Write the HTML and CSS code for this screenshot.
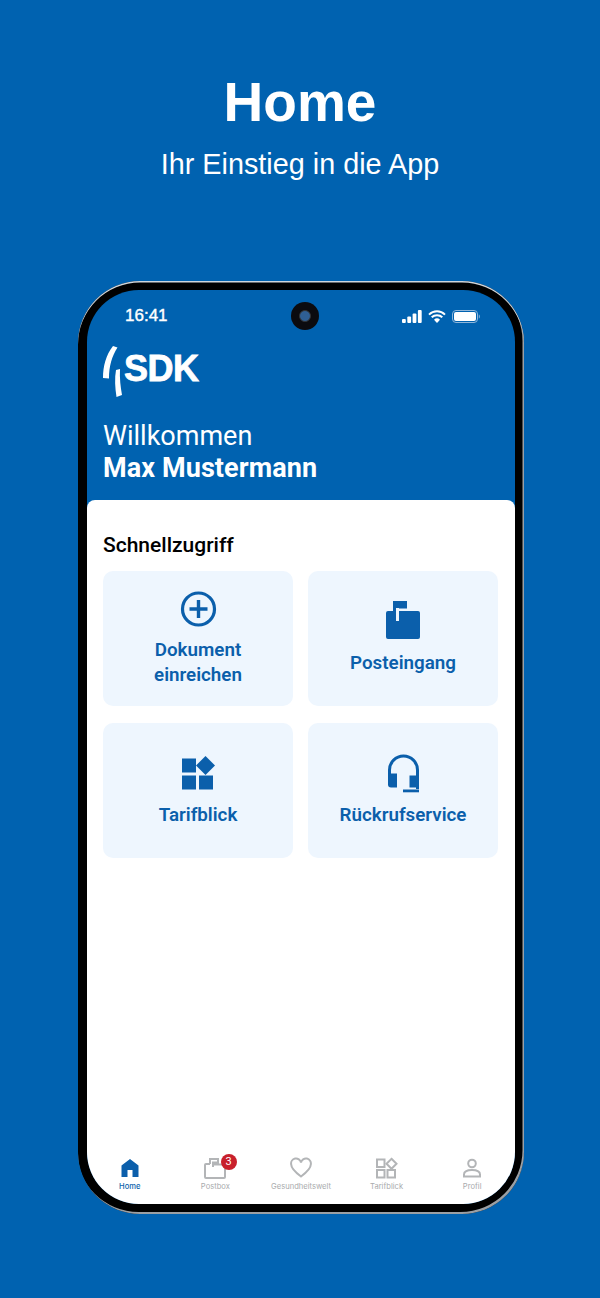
FILE: index.html
```html
<!DOCTYPE html><html><head><meta charset='utf-8'/>
<title>SDK Home</title>
<link rel="stylesheet" href="styles.css">
</head>
<body>

<div class="head">
	<h1>Home</h1>
	<p>Ihr Einstieg in die App</p>
</div>

<div class="phone">
	<div class="camera"><span></span></div>
	<div class="screen">
		<div class="top">
			<div class="status">
				<span class="time">16:41</span>
				<div class="status-icons">
					<svg width="20" height="13" viewBox="0 0 20 13"><rect x="0" y="9" width="3.800" height="4" rx="1"/><rect x="5.300" y="6.500" width="3.800" height="6.500" rx="1"/><rect x="10.600" y="3.500" width="3.800" height="9.500" rx="1"/><rect x="15.900" y="0" width="3.800" height="13" rx="1"/></svg>
					<svg class="wifi" width="18" height="13" viewBox="0 0 18 13"><path d="M1 4.600a11.500 11.500 0 0 1 16 0M3.700 7.300a7.600 7.600 0 0 1 10.600 0" fill="none" stroke="#fff" stroke-width="2"/><path d="M9 13l-3-3.200a4.300 4.300 0 0 1 6 0z"/></svg>
					<svg width="28" height="13" viewBox="0 0 28 13"><rect x="0.500" y="0.500" width="25" height="12" rx="3.500" fill="none" stroke="#8fb6da"/><rect x="2" y="2" width="22" height="9" rx="2"/><path d="M26.800 4.500c.8.300 1 1.200 1 2s-.2 1.700-1 2z" fill="#8fb6da"/></svg>
				</div>
			</div>
			<div class="logo">
				<svg width="24" height="52" viewBox="0 0 24 52"><path d="M10 0l4.500 1.500C9 10 6 20 6 32.500L0 32C0 20 3 9 10 0z"/><path d="M13 24l4-1c-.5 9 .5 18 2 26l-5.500 2c-1.500-9-2-19-.5-27z"/></svg>
				<span>SDK</span>
			</div>
			<div class="welcome">Willkommen</div>
			<div class="name">Max Mustermann</div>
		</div>

		<div class="sheet">
			<h2>Schnellzugriff</h2>
			<div class="grid">
				<a class="card">
					<svg width="37" height="37" viewBox="0 0 37 37"><circle cx="18.500" cy="18.500" r="16" fill="none" stroke="#0b5fab" stroke-width="3.200"/><path d="M18.500 9.500v18M9.500 18.500h18" fill="none" stroke="#0b5fab" stroke-width="3.400"/></svg>
					<span>Dokument<br>einreichen</span>
				</a>
				<a class="card">
					<svg width="36" height="40" viewBox="0 2 36 40"><path d="M8 1h14v7.500H13V11h20a2 2 0 0 1 2 2v24a2 2 0 0 1-2 2H3a2 2 0 0 1-2-2V13a2 2 0 0 1 2-2h5z"/><rect x="11" y="8" width="3" height="13" fill="#eef6fe"/></svg>
					<span>Posteingang</span>
				</a>
				<a class="card">
					<svg width="36" height="40" viewBox="0 0 36 40"><rect x="2" y="4.500" width="14" height="14"/><rect x="2" y="21.500" width="14" height="14"/><rect x="19" y="21.500" width="14" height="14"/><path d="M25.500 2l9.500 9.500-9.500 9.500-9.500-9.500z"/></svg>
					<span>Tarifblick</span>
				</a>
				<a class="card">
					<svg width="36" height="40" viewBox="0 0 36 40"><path d="M4.500 28V16a14 14 0 0 1 28 0v19" fill="none" stroke="#0b5fab" stroke-width="3"/><path d="M3 19.500h9v14H6a3 3 0 0 1-3-3z"/><path d="M24.500 21.500H34v12h-9.500z"/><path d="M18 35.500h16v2.800H18z"/></svg>
					<span>Rückrufservice</span>
				</a>
			</div>
		</div>

		<div class="tabs">
			<div class="tab on">
				<svg width="20" height="20" viewBox="0 0 20 20"><path d="M10 1l8.500 6.500V19H12.500v-7h-5v7H1.500V7.500z"/></svg>
				<span>Home</span>
			</div>
			<div class="tab">
				<svg class="line" width="24" height="22" viewBox="0 0 24 22"><path d="M7 7V2h8v3.500h-5V10M7 7H3a1 1 0 0 0-1 1v12a1 1 0 0 0 1 1h18a1 1 0 0 0 1-1V10M10 7.500h9"/></svg>
				<span>Postbox</span>
				<b class="badge">3</b>
			</div>
			<div class="tab">
				<svg class="line" width="22" height="20" viewBox="0 0 22 20"><path d="M11 18.500C5 14 1.200 10.500 1.200 6.500A5 5 0 0 1 11 4.500a5 5 0 0 1 9.800 2c0 4-3.800 7.500-9.800 12z"/></svg>
				<span>Gesundheitswelt</span>
			</div>
			<div class="tab">
				<svg class="line" width="22" height="20" viewBox="0 0 22 20"><rect x="1" y="1.500" width="7.500" height="7.500"/><rect x="1" y="12" width="7.500" height="7.500"/><rect x="11.500" y="12" width="7.500" height="7.500"/><path d="M15.500 0.800l5 5-5 5-5-5z"/></svg>
				<span>Tarifblick</span>
			</div>
			<div class="tab">
				<svg class="line" width="20" height="20" viewBox="0 0 20 20"><circle cx="10" cy="5.500" r="3.800"/><path d="M2 18.500v-2c0-3 3.500-4.500 8-4.500s8 1.500 8 4.500v2z"/></svg>
				<span>Profil</span>
			</div>
		</div>
	</div>
</div>

</body>
</html>
```

FILE: styles.css
```css
body {
	margin: 0px;
	height: 1298px;
	overflow: hidden;
	background-color: #0062b0;
	color: #fff;
	font-family: Roboto, sans-serif;
}
.head {
	height: 281px;
	text-align: center;
	font-family: "Liberation Sans", Arial, sans-serif;
}
.head h1 {
	margin: 0;
	padding-top: 71px;
	font-size: 55px;
	line-height: 62px;
	font-weight: bold;
}
.head p {
	margin: 0;
	padding-top: 15px;
	font-size: 28.800px;
	line-height: 32px;
}

/* phone */
.phone {
	position: relative;
	box-sizing: border-box;
	width: 446px;
	height: 933px;
	margin-left: 78px;
	padding: 9px 9px 10px 9px;
	background-color: #000;
	border-radius: 62px;
	box-shadow: inset 0 1.500px 0 #cfd6dc, inset -1.500px -2px 0 #9a9fa4;
}
.screen {
	display: flex;
	flex-direction: column;
	height: 100%;
	overflow: hidden;
	background-color: #0062b0;
	border-radius: 52px;
}
.camera {
	position: absolute;
	left: 213px;
	top: 21px;
	width: 28px;
	height: 28px;
	background-color: #0b0b0f;
	border-radius: 50%;
}
.camera span {
	position: absolute;
	left: 8px;
	top: 8px;
	width: 12px;
	height: 12px;
	background-color: #2f5f94;
	border: 1px solid #333;
	box-sizing: border-box;
	border-radius: 50%;
}

/* blue part */
.top {
	height: 210px;
	flex: none;
	box-sizing: border-box;
	padding: 0 16px;
}
.status {
	display: flex;
	justify-content: space-between;
	align-items: center;
	padding: 16px 19px 0 22px;
	height: 20px;
}
.time {
	font-family: "Liberation Sans", Arial, sans-serif;
	font-size: 17px;
	-webkit-text-stroke: 0.400px #fff;
	line-height: 20px;
}
.status-icons {
	display: flex;
	align-items: center;
	gap: 6px;
}
.status-icons svg {
	fill: #fff;
}
.logo {
	display: flex;
	align-items: center;
	height: 52px;
	margin-top: 20px;
}
.logo svg {
	fill: #fff;
}
.logo span {
	margin: -6px 0 0 -3px;
	font-family: "Liberation Sans", Arial, sans-serif;
	font-size: 36px;
	font-weight: bold;
	letter-spacing: -0.500px;
	-webkit-text-stroke: 0.800px #fff;
}
.welcome {
	margin-top: 22px;
	font-size: 27px;
	line-height: 32px;
}
.name {
	font-size: 27px;
	font-weight: bold;
	letter-spacing: 0.100px;
	line-height: 32px;
}

/* white part */
.sheet {
	flex: 1;
	padding: 0 17px 0 16px;
	background-color: #fff;
	border-radius: 8px 8px 0 0;
	color: #000;
}
.sheet h2 {
	margin: 0;
	padding: 32px 0 12px 0;
	font-size: 21px;
	font-weight: 500;
	line-height: 27px;
}
.grid {
	display: grid;
	grid-template-columns: 190px 190px;
	grid-auto-rows: 135px;
	column-gap: 15px;
	row-gap: 17px;
}
.card {
	display: flex;
	flex-direction: column;
	align-items: center;
	justify-content: center;
	gap: 9px;
	background-color: #eef6fe;
	border-radius: 10px;
	color: #0b5fab;
	font-size: 18.800px;
	font-weight: 600;
	line-height: 25px;
	text-align: center;
}
.card svg {
	display: block;
	height: 40px;
	overflow: visible;
	fill: #0b5fab;
}

/* tab bar */
.tabs {
	display: flex;
	flex: none;
	height: 66px;
	background-color: #fff;
}
.tab {
	position: relative;
	flex: 1;
	display: flex;
	flex-direction: column;
	align-items: center;
	padding-top: 19px;
	color: #a9abad;
	font-family: Inter, sans-serif;
	font-size: 7.600px;
	line-height: 10px;
}
.tab svg {
	display: block;
	height: 22px;
	margin-bottom: 3px;
}
.tab .line {
	fill: none;
	stroke: #b3b5b7;
	stroke-width: 2;
}
.tab.on {
	color: #0b5fab;
	font-weight: 500;
}
.tab.on svg {
	fill: #0b5fab;
}
.badge {
	position: absolute;
	left: 48px;
	top: 16px;
	width: 16px;
	height: 16px;
	background-color: #c8202c;
	border-radius: 50%;
	color: #fff;
	font-family: Roboto, sans-serif;
	font-size: 11px;
	font-weight: normal;
	line-height: 16px;
	text-align: center;
}
```
